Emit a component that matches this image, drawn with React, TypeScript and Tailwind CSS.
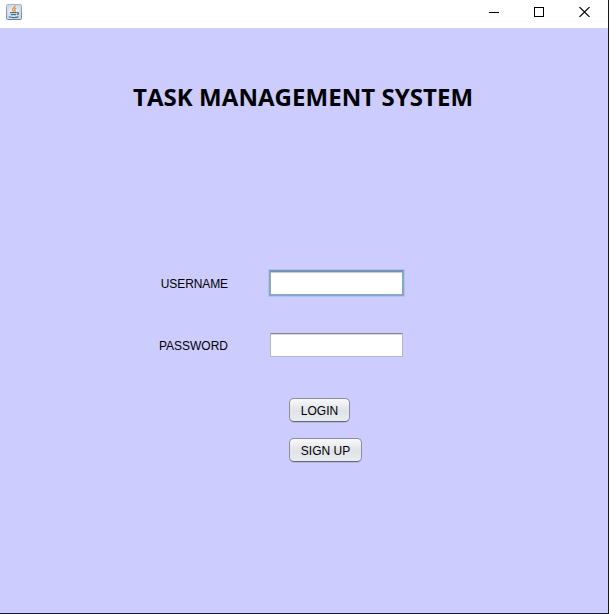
import React from "react";

function JavaIcon() {
  return (
    <svg width="16" height="16" viewBox="0 0 16 16" fill="none" aria-hidden="true">
      <defs>
        <linearGradient id="tile" x1="0" y1="0" x2="0" y2="1">
          <stop offset="0" stopColor="#a3b8ce" />
          <stop offset="1" stopColor="#6b859f" />
        </linearGradient>
        <radialGradient id="face">
          <stop offset="0" stopColor="#ffffff" />
          <stop offset="1" stopColor="#ccd9e6" />
        </radialGradient>
      </defs>
      <rect x="0.5" y="0.5" width="15" height="15" rx="1" fill="url(#face)" stroke="url(#tile)" />
      <path d="M9 1.500c.6 2-3 2.700-2.400 4.600.2.600.9.900.9 1.600M10.300 4c-1.700.7-2.200 1.500-1.300 2.400.4.500.2.900-.3 1.300" stroke="#e08a45" strokeWidth="1.300" />
      <path d="M4 8.600h6.800M4.800 10.600h5.400M2.800 12.800c2.500.8 7 .8 9.700 0M11 8.500c2.300-.2 1.800 1.700 0 2.100" stroke="#466b8c" strokeWidth="1.200" />
    </svg>
  );
}

function TitleBar() {
  return (
    <header className="flex h-7 shrink-0 items-start justify-between bg-white pl-1.5">
      <div className="pt-1">
        <JavaIcon />
      </div>
      <div className="flex gap-[35px] pr-[18px] pt-[7px]">
        <svg width="10" height="10" shapeRendering="crispEdges" aria-label="Minimize">
          <path d="M0 5.500h10" stroke="#000" />
        </svg>
        <svg width="10" height="10" shapeRendering="crispEdges" aria-label="Maximize">
          <rect x=".5" y=".5" width="9" height="9" fill="none" stroke="#000" />
        </svg>
        <svg width="11" height="10" aria-label="Close">
          <path d="M.5 0l10 10M10.500 0l-10 10" stroke="#000" strokeWidth="1.100" />
        </svg>
      </div>
    </header>
  );
}

function NimbusButton({ children, className }: { children: React.ReactNode; className: string }) {
  return (
    <button
      className={`h-6 rounded-[5px] border border-[#8b8e96] border-b-[#62656c] bg-linear-to-b from-[#f8f9fb] via-[#dfe2e6] via-55% to-[#eaeef2] pt-0.5 text-center text-[12px] leading-5 whitespace-nowrap shadow-[0_1px_0_#b9b9e6] ${className}`}
    >
      {children}
    </button>
  );
}

export default function App() {
  return (
    <div className="h-[614px] w-[611px] overflow-hidden bg-white font-['Liberation_Sans',Arial,sans-serif] text-black">
      <div className="flex h-[614px] w-[609px] flex-col border-r border-b border-[#17172a] bg-[#ccccff]">
        <TitleBar />
        <main className="flex flex-col">
          <h1 className="mt-[53px] ml-[133px] h-8 w-[350px] font-['Open_Sans','Noto_Sans',sans-serif] text-[24px] leading-8 font-bold tracking-[0.05px] whitespace-nowrap">
            TASK MANAGEMENT SYSTEM
          </h1>
          <form className="mt-[157px] flex flex-col" onSubmit={(e) => e.preventDefault()}>
            <label className="flex h-[26px] items-center text-[12px]">
              <span className="mr-[41px] w-[228px] pt-0.5 text-right tracking-[-0.1px]">USERNAME</span>
              <input className="h-[26px] w-[135px] border-2 border-[#86a8cb] border-t-[#7592b4] bg-white px-1 shadow-[0_0_0_1px_#b3c1ec,inset_0_1px_0_#c9cbd1] outline-none" />
            </label>
            <label className="mt-[37px] flex h-6 items-center text-[12px]">
              <span className="mr-[42px] w-[228px] pt-0.5 text-right">PASSWORD</span>
              <input
                type="password"
                className="h-6 w-[133px] border border-[#b6b6ca] border-t-[#84848e] bg-white px-1 shadow-[inset_0_1px_0_#d9d9dd] outline-none"
              />
            </label>
            <div className="mt-[41px] ml-[289px] flex flex-col items-start gap-4">
              <NimbusButton className="w-[61px]">LOGIN</NimbusButton>
              <NimbusButton className="w-[73px]">SIGN UP</NimbusButton>
            </div>
          </form>
        </main>
      </div>
    </div>
  );
}
